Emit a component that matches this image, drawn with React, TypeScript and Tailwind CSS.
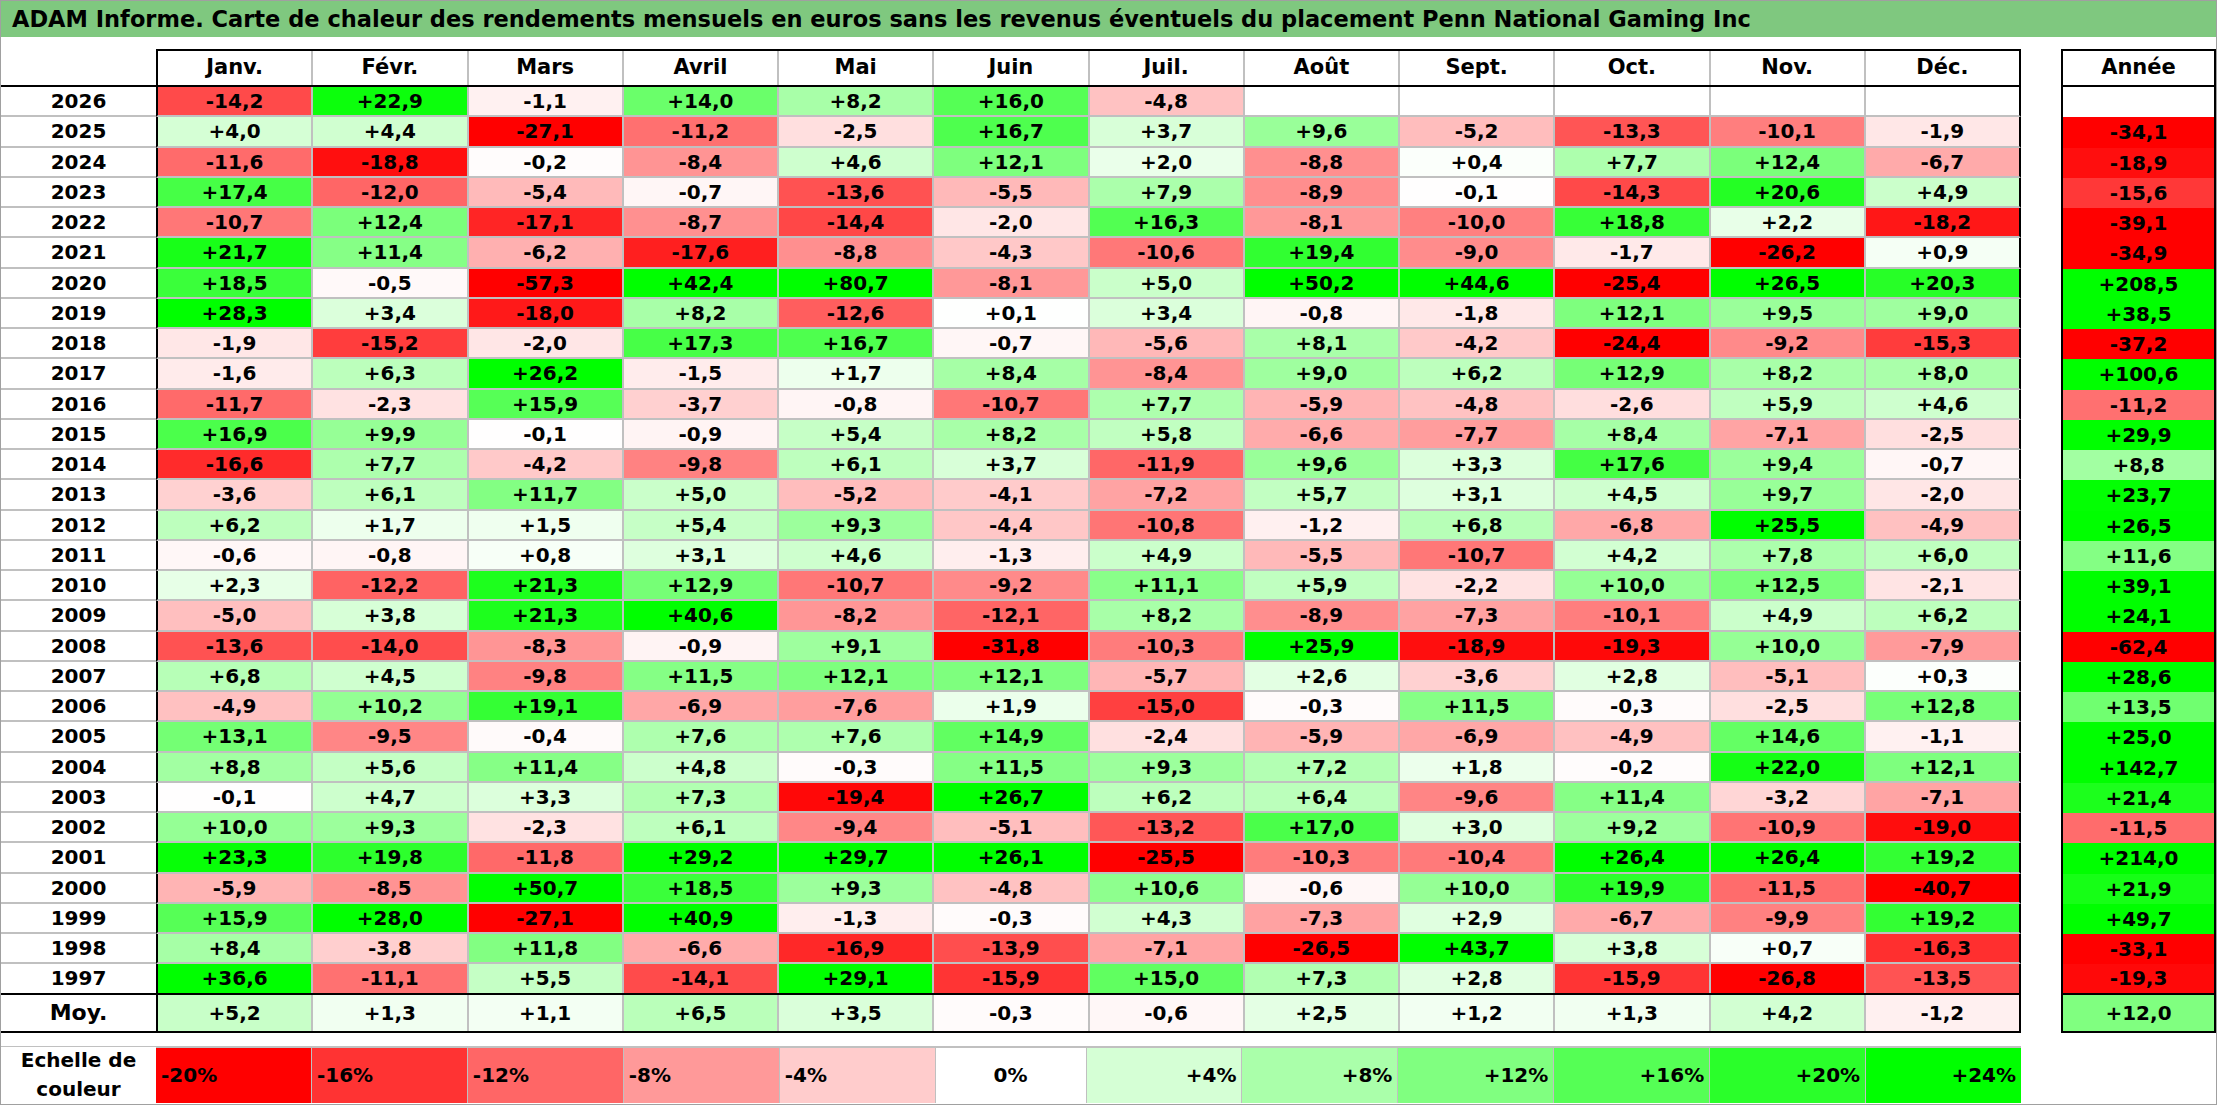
import React from "react";

const months = ["Janv.", "Févr.", "Mars", "Avril", "Mai", "Juin", "Juil.", "Août", "Sept.", "Oct.", "Nov.", "Déc."];

const raw: string[] = [
  "2026|-14,2|+22,9|-1,1|+14,0|+8,2|+16,0|-4,8||||||",
  "2025|+4,0|+4,4|-27,1|-11,2|-2,5|+16,7|+3,7|+9,6|-5,2|-13,3|-10,1|-1,9|-34,1",
  "2024|-11,6|-18,8|-0,2|-8,4|+4,6|+12,1|+2,0|-8,8|+0,4|+7,7|+12,4|-6,7|-18,9",
  "2023|+17,4|-12,0|-5,4|-0,7|-13,6|-5,5|+7,9|-8,9|-0,1|-14,3|+20,6|+4,9|-15,6",
  "2022|-10,7|+12,4|-17,1|-8,7|-14,4|-2,0|+16,3|-8,1|-10,0|+18,8|+2,2|-18,2|-39,1",
  "2021|+21,7|+11,4|-6,2|-17,6|-8,8|-4,3|-10,6|+19,4|-9,0|-1,7|-26,2|+0,9|-34,9",
  "2020|+18,5|-0,5|-57,3|+42,4|+80,7|-8,1|+5,0|+50,2|+44,6|-25,4|+26,5|+20,3|+208,5",
  "2019|+28,3|+3,4|-18,0|+8,2|-12,6|+0,1|+3,4|-0,8|-1,8|+12,1|+9,5|+9,0|+38,5",
  "2018|-1,9|-15,2|-2,0|+17,3|+16,7|-0,7|-5,6|+8,1|-4,2|-24,4|-9,2|-15,3|-37,2",
  "2017|-1,6|+6,3|+26,2|-1,5|+1,7|+8,4|-8,4|+9,0|+6,2|+12,9|+8,2|+8,0|+100,6",
  "2016|-11,7|-2,3|+15,9|-3,7|-0,8|-10,7|+7,7|-5,9|-4,8|-2,6|+5,9|+4,6|-11,2",
  "2015|+16,9|+9,9|-0,1|-0,9|+5,4|+8,2|+5,8|-6,6|-7,7|+8,4|-7,1|-2,5|+29,9",
  "2014|-16,6|+7,7|-4,2|-9,8|+6,1|+3,7|-11,9|+9,6|+3,3|+17,6|+9,4|-0,7|+8,8",
  "2013|-3,6|+6,1|+11,7|+5,0|-5,2|-4,1|-7,2|+5,7|+3,1|+4,5|+9,7|-2,0|+23,7",
  "2012|+6,2|+1,7|+1,5|+5,4|+9,3|-4,4|-10,8|-1,2|+6,8|-6,8|+25,5|-4,9|+26,5",
  "2011|-0,6|-0,8|+0,8|+3,1|+4,6|-1,3|+4,9|-5,5|-10,7|+4,2|+7,8|+6,0|+11,6",
  "2010|+2,3|-12,2|+21,3|+12,9|-10,7|-9,2|+11,1|+5,9|-2,2|+10,0|+12,5|-2,1|+39,1",
  "2009|-5,0|+3,8|+21,3|+40,6|-8,2|-12,1|+8,2|-8,9|-7,3|-10,1|+4,9|+6,2|+24,1",
  "2008|-13,6|-14,0|-8,3|-0,9|+9,1|-31,8|-10,3|+25,9|-18,9|-19,3|+10,0|-7,9|-62,4",
  "2007|+6,8|+4,5|-9,8|+11,5|+12,1|+12,1|-5,7|+2,6|-3,6|+2,8|-5,1|+0,3|+28,6",
  "2006|-4,9|+10,2|+19,1|-6,9|-7,6|+1,9|-15,0|-0,3|+11,5|-0,3|-2,5|+12,8|+13,5",
  "2005|+13,1|-9,5|-0,4|+7,6|+7,6|+14,9|-2,4|-5,9|-6,9|-4,9|+14,6|-1,1|+25,0",
  "2004|+8,8|+5,6|+11,4|+4,8|-0,3|+11,5|+9,3|+7,2|+1,8|-0,2|+22,0|+12,1|+142,7",
  "2003|-0,1|+4,7|+3,3|+7,3|-19,4|+26,7|+6,2|+6,4|-9,6|+11,4|-3,2|-7,1|+21,4",
  "2002|+10,0|+9,3|-2,3|+6,1|-9,4|-5,1|-13,2|+17,0|+3,0|+9,2|-10,9|-19,0|-11,5",
  "2001|+23,3|+19,8|-11,8|+29,2|+29,7|+26,1|-25,5|-10,3|-10,4|+26,4|+26,4|+19,2|+214,0",
  "2000|-5,9|-8,5|+50,7|+18,5|+9,3|-4,8|+10,6|-0,6|+10,0|+19,9|-11,5|-40,7|+21,9",
  "1999|+15,9|+28,0|-27,1|+40,9|-1,3|-0,3|+4,3|-7,3|+2,9|-6,7|-9,9|+19,2|+49,7",
  "1998|+8,4|-3,8|+11,8|-6,6|-16,9|-13,9|-7,1|-26,5|+43,7|+3,8|+0,7|-16,3|-33,1",
  "1997|+36,6|-11,1|+5,5|-14,1|+29,1|-15,9|+15,0|+7,3|+2,8|-15,9|-26,8|-13,5|-19,3",
];
const moy = "Moy.|+5,2|+1,3|+1,1|+6,5|+3,5|-0,3|-0,6|+2,5|+1,2|+1,3|+4,2|-1,2|+12,0";

function colorOf(v: number | null): string {
  if (v === null || isNaN(v)) return "#ffffff";
  if (v < 0) {
    const t = Math.min(-v / 20, 1);
    const c = Math.round(255 * (1 - t));
    return `rgb(255,${c},${c})`;
  }
  const t = Math.min(v / 24, 1);
  const c = Math.round(255 * (1 - t));
  return `rgb(${c},255,${c})`;
}

function colorOfStr(s: string): string {
  if (!s) return "#ffffff";
  return colorOf(parseFloat(s.replace(",", ".")));
}

const scale = [-20, -16, -12, -8, -4, 0, 4, 8, 12, 16, 20, 24];

function DataRow({ cells, last }: { cells: string[]; last: boolean }) {
  const label = cells[0];
  const vals = cells.slice(1, 13);
  const year = cells[13];
  const bottom = last ? "border-b-2 border-b-black" : "border-b-2 border-b-[#c0c0c0]";
  return (
    <div className="flex h-[30.26px]">
      <div className={`w-[155px] flex items-center justify-center text-[20px] ${bottom}`}>{label}</div>
      <div className={`w-[1865px] flex border-x-2 border-x-black ${bottom}`}>
        {vals.map((v, i) => (
          <div
            key={i}
            className={`flex-1 flex items-center justify-center text-[20px] ${i > 0 ? "border-l-2 border-l-[#c0c0c0]" : ""}`}
            style={{ backgroundColor: colorOfStr(v) }}
          >
            {v}
          </div>
        ))}
      </div>
      <div className="w-[40px]" />
      <div
        className={`w-[155px] flex items-center justify-center text-[20px] border-x-2 border-x-black ${last ? "border-b-2 border-b-black" : ""}`}
        style={{ backgroundColor: colorOfStr(year) }}
      >
        {year}
      </div>
    </div>
  );
}

export default function App() {
  const moyCells = moy.split("|");
  return (
    <div className="w-[2217px] h-[1105px] bg-white border border-[#a0a0a0] flex flex-col font-bold text-black font-['DejaVu_Sans',sans-serif] overflow-hidden">
      <div className="h-[36px] shrink-0 bg-[#7fc87f] flex items-center pl-[11px] text-[22.5px] leading-none whitespace-nowrap">
        ADAM Informe. Carte de chaleur des rendements mensuels en euros sans les revenus éventuels du placement Penn National Gaming Inc
      </div>

      <div className="mt-[12px] flex flex-col">
        <div className="flex h-[38px]">
          <div className="w-[155px] border-b-2 border-b-black" />
          <div className="w-[1865px] flex border-2 border-black">
            {months.map((m, i) => (
              <div
                key={m}
                className={`flex-1 flex items-center justify-center text-[21px] ${i > 0 ? "border-l-2 border-l-[#c0c0c0]" : ""}`}
              >
                {m}
              </div>
            ))}
          </div>
          <div className="w-[40px]" />
          <div className="w-[155px] flex items-center justify-center text-[21px] border-2 border-black">Année</div>
        </div>

        {raw.map((r, idx) => (
          <DataRow key={idx} cells={r.split("|")} last={idx === raw.length - 1} />
        ))}

        <div className="flex h-[38.5px]">
          <div className="w-[155px] flex items-center justify-center text-[22px] border-b-2 border-b-black">{moyCells[0]}</div>
          <div className="w-[1865px] flex border-x-2 border-x-black border-b-2 border-b-black">
            {moyCells.slice(1, 13).map((v, i) => (
              <div
                key={i}
                className={`flex-1 flex items-center justify-center text-[20px] ${i > 0 ? "border-l-2 border-l-[#c0c0c0]" : ""}`}
                style={{ backgroundColor: colorOfStr(v) }}
              >
                {v}
              </div>
            ))}
          </div>
          <div className="w-[40px]" />
          <div
            className="w-[155px] flex items-center justify-center text-[20px] border-x-2 border-x-black border-b-2 border-b-black"
            style={{ backgroundColor: colorOfStr(moyCells[13]) }}
          >
            {moyCells[13]}
          </div>
        </div>
      </div>

      <div className="mt-[12.5px] flex h-[57px]">
        <div className="w-[155px] flex flex-col items-center justify-center text-[20px] leading-[29px] border-t border-t-[#c0c0c0]">
          <span>Echelle de</span>
          <span>couleur</span>
        </div>
        <div className="w-[1865px] flex border-t-2 border-t-[#c0c0c0]">
          {scale.map((s, i) => (
            <div
              key={s}
              className={`flex-1 flex items-center text-[20px] ${i > 0 ? "border-l border-l-[#c0c0c0]" : ""} ${
                s < 0 ? "justify-start pl-[5px]" : s === 0 ? "justify-center" : "justify-end pr-[5px]"
              }`}
              style={{ backgroundColor: colorOf(s) }}
            >
              {s > 0 ? `+${s}%` : `${s}%`}
            </div>
          ))}
        </div>
      </div>
    </div>
  );
}
